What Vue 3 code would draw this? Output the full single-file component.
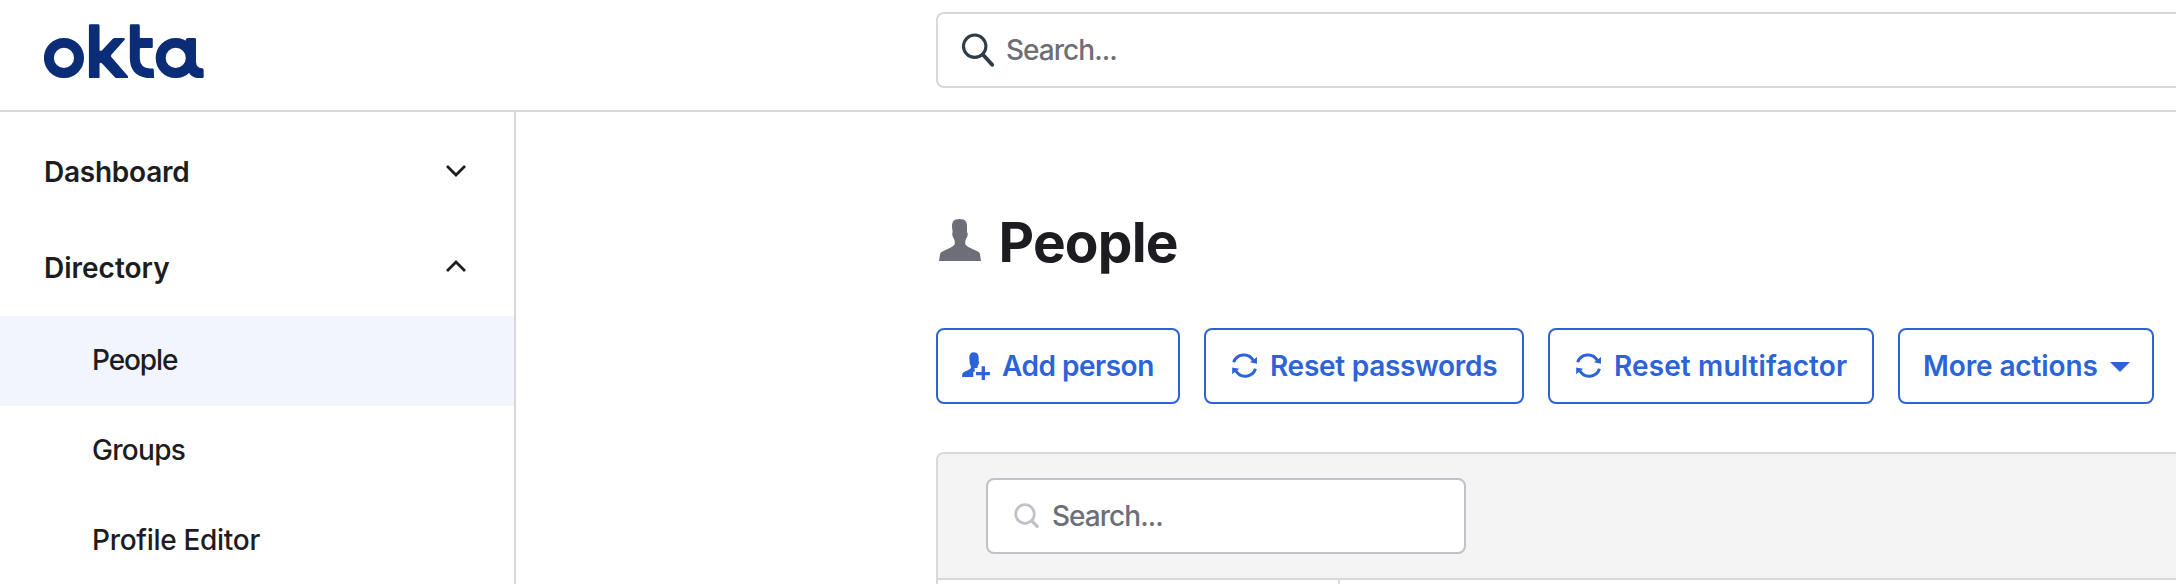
<script setup>
const subItems = [
  { label: 'People', cls: 'people', active: true },
  { label: 'Groups', cls: 'groups', active: false },
  { label: 'Profile Editor', cls: 'profile', active: false },
]
const resets = [
  { label: 'Reset passwords', cls: 'passwords' },
  { label: 'Reset multifactor', cls: 'multifactor' },
]
</script>

<template>
  <div class="page">
    <header class="topbar">
      <svg class="logo" viewBox="72 71 481 164" role="img" aria-label="okta">
        <circle cx="132" cy="173" r="45.3" />
        <path d="M211 72h24q4 0 4 4v75q5 2 9-3l30-32q3-3 7-3h26q6 1 3 6l-39 44q-3 4 0 8l49 56q2 6-3 7h-29q-4 0-7-3l-37-40q-9-8-9 1v38q0 4-4 4h-24q-4 0-4-4V76q0-4 4-4z" />
        <path d="M334 72h22q4 0 4 4v35q0 2 3 2h33q3 0 3 3v24q0 3-3 3h-33q-3 0-3 3v30q2 27 30 29h8q4 0 4 4l1 22q0 3-5 3h-10q-58-4-58-62V76q0-4 4-4z" />
        <circle cx="468" cy="173" r="45.3" />
        <path d="M497 121q1-8 7-8h21q4 0 4 4v68q1 18 18 19q5 0 5 5v20q0 5-5 5h-10q-20-1-28-15l-10-20v-78z" />
      </svg>
      <div class="global-search">
        <svg class="search-icon" viewBox="0 0 34 36">
          <circle cx="13.7" cy="14.2" r="11.2" />
          <path d="M21.8 22.5L31.2 32.8" />
        </svg>
        <span class="placeholder">Search...</span>
      </div>
    </header>

    <div class="body">
      <nav class="sidebar">
        <div class="group">
          <span class="dashboard">Dashboard</span>
          <svg class="chevron down" viewBox="0 0 22 14"><path d="M2 2L11 11L20 2" /></svg>
        </div>
        <div class="group">
          <span class="directory">Directory</span>
          <svg class="chevron up" viewBox="0 0 22 14"><path d="M2 12L11 3L20 12" /></svg>
        </div>
        <div v-for="item in subItems" :key="item.label" class="item" :class="[item.cls, { active: item.active }]">
          {{ item.label }}
        </div>
      </nav>

      <main class="content">
        <h1 class="title">
          <svg class="person" viewBox="57 57 126 126">
            <path d="M105 59q13-4 27 0q10 6 9 22v16q3 2 2 7q-1 9-5 12q-3 8-2 17q3 5 9 8l30 14q4 2 5 8l3 20H57l3-20q1-6 6-8l29-14q6-3 9-8q1-9-2-17q-4-3-5-12q-1-5 1-7l-2-16q-1-17 9-22z" />
          </svg>
          <span>People</span>
        </h1>

        <div class="actions">
          <button class="btn add">
            <svg class="add-icon" viewBox="126 125 85 86">
              <path d="M152 128q9-4 18 0q7 4 6 16v9q2 2 1 5q-1 6-3 7q-2 4-1 8h-9v11h-4v16h-34l1-9q1-4 5-6l17-8q4-2 4-8l-3-8q-2-6-1-7l-1-9q-1-12 4-15z" />
              <path d="M185 168h10v17h15v10h-15v15h-10v-15h-17v-10h17z" />
            </svg>
            <span>Add person</span>
          </button>
          <button v-for="r in resets" :key="r.label" class="btn" :class="r.cls">
            <svg class="sync-icon" viewBox="126 130 76 76">
              <g v-for="a in [0, 180]" :key="a" :transform="`rotate(${a} 163.8 167.8)`">
                <path class="arc" d="M131 158A32.5 32.5 0 0 1 190 152" />
                <path class="head" d="M201 142V162L180 158z" />
              </g>
            </svg>
            <span>{{ r.label }}</span>
          </button>
          <button class="btn more">
            <span>More actions</span>
            <svg class="caret" viewBox="0 0 20 10"><path d="M0 0H20L10 10z" /></svg>
          </button>
        </div>

        <section class="panel">
          <div class="panel-head">
            <div class="table-search">
              <svg class="search-icon small" viewBox="0 0 26 26">
                <circle cx="11" cy="11" r="9.3" />
                <path d="M18.2 18.4L23.2 23.4" />
              </svg>
              <span class="placeholder">Search...</span>
            </div>
          </div>
          <div class="columns"><div class="col-first"></div></div>
        </section>
      </main>
    </div>
  </div>
</template>

<style>
body { background: #fff; overflow: hidden; }
</style>

<style scoped>
* { box-sizing: border-box; }
.page {
  width: 2176px;
  height: 584px;
  overflow: hidden;
  display: flex;
  flex-direction: column;
  font: 500 28px/40px Inter, sans-serif;
  color: #1d1d21;
}
svg { display: block; flex: none; }
.topbar {
  height: 112px;
  flex: none;
  border-bottom: 2px solid #d7d7dc;
  display: flex;
  align-items: flex-start;
  padding-left: 44px;
}
.logo { width: 160px; height: 54.6px; margin-top: 23.7px; fill: #0b2c77; }
.logo circle { fill: none; stroke: #0b2c77; stroke-width: 30; }
.global-search {
  flex: none;
  width: 1300px;
  height: 76px;
  margin: 12px 0 0 732px;
  border: 2px solid #d7d7dc;
  border-radius: 8px;
  display: flex;
  align-items: center;
  padding-left: 23px;
}
.search-icon { width: 34px; height: 36px; fill: none; stroke: #2f3d49; stroke-width: 3.1; stroke-linecap: round; }
.search-icon path { stroke-width: 3.9; }
.placeholder { color: #6e6e78; letter-spacing: -0.98px; }
.global-search .placeholder { margin-left: 11px; }

.body { display: flex; flex: 1; min-height: 0; }
.sidebar { width: 516px; flex: none; border-right: 2px solid #d7d7dc; padding-top: 12px; }
.group {
  height: 96px;
  display: flex;
  align-items: center;
  justify-content: space-between;
  padding: 0 47px 0 44px;
  font-weight: 600;
}
.dashboard { letter-spacing: -0.24px; }
.chevron { width: 22px; height: 14px; fill: none; stroke: #1d1d21; stroke-width: 2.8; }
.down { margin-top: -2px; }
.up { margin-top: -5px; }
.item { height: 90px; padding: 0 0 2px 92px; display: flex; align-items: center; }
.item.active { background: #f2f5fe; }
.people { letter-spacing: -1.1px; }
.groups { letter-spacing: -0.7px; }
.profile { letter-spacing: -0.3px; }

.content { flex: none; width: 1700px; padding: 104px 0 0 420px; }
.title {
  margin: 0;
  height: 52px;
  display: flex;
  align-items: center;
  font-size: 55px;
  font-weight: 700;
  line-height: 52px;
  letter-spacing: -0.8px;
}
.person { width: 42px; height: 42px; margin: -4px 17.5px 0 3px; fill: #6e6e78; }
.actions { display: flex; gap: 24px; margin-top: 60px; }
.btn {
  height: 76px;
  flex: none;
  display: flex;
  align-items: center;
  margin: 0;
  padding: 0 0 0 24px;
  border: 2px solid #2c64d8;
  border-radius: 8px;
  background: #fff;
  color: #2c64d8;
  font: 600 28px/40px Inter, sans-serif;
  white-space: nowrap;
}
.btn svg { fill: #2c64d8; }
.add { width: 244px; letter-spacing: -0.48px; }
.passwords { width: 320px; letter-spacing: -0.27px; padding-left: 26px; }
.multifactor { width: 326px; letter-spacing: 0.12px; padding-left: 26px; }
.more { width: 256px; letter-spacing: -0.12px; padding-left: 23px; }
.add-icon { width: 28.3px; height: 28.7px; margin-right: 11.7px; }
.sync-icon { width: 25.3px; height: 25.3px; margin-right: 12.7px; }
.arc { fill: none; stroke: #2c64d8; stroke-width: 9; }
.caret { width: 20px; height: 10px; margin: 2px 0 0 12px; }

.panel {
  width: 1700px;
  margin-top: 48px;
  border: 2px solid #d7d7dc;
  border-radius: 8px 8px 0 0;
  overflow: hidden;
}
.panel-head { background: #f4f4f4; border-bottom: 2px solid #d7d7dc; padding: 24px 48px; }
.table-search {
  width: 480px;
  height: 76px;
  border: 2px solid #c1c1c8;
  border-radius: 8px;
  background: #fff;
  display: flex;
  align-items: center;
  padding-left: 25.5px;
}
.small { width: 26px; height: 26px; stroke: #c1c1c8; stroke-width: 2.7; }
.small path { stroke-width: 3.4; }
.table-search .placeholder { margin-left: 12.5px; }
.columns { height: 40px; }
.col-first { width: 402px; height: 40px; border-right: 2px solid #d7d7dc; }
</style>
